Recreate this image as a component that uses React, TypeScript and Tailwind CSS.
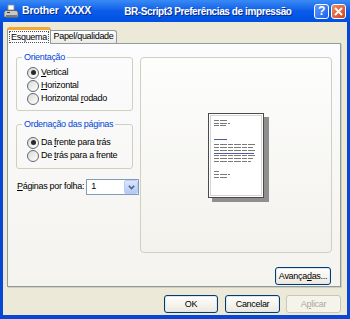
import React from "react";

type RadioProps = { checked?: boolean; pre: string; u: string; post: string };

function Radio({ checked, pre, u, post }: RadioProps) {
  return (
    <div className="flex items-center h-[13px] gap-[2px] whitespace-nowrap">
      <span className="shrink-0 w-[12px] h-[12px] rounded-full border border-[#5a6a7a] bg-linear-to-br from-[#dcdad0] to-white flex items-center justify-center">
        {checked && <span className="w-[5px] h-[5px] rounded-full bg-[#2a2a2a]" />}
      </span>
      <span>
        {pre}
        <span className="underline underline-offset-1">{u}</span>
        {post}
      </span>
    </div>
  );
}

function GroupBox({ title, className, children }: { title: string; className?: string; children: React.ReactNode }) {
  return (
    <fieldset className={`min-w-0 border border-[#d0d0bf] rounded-[3px] ${className ?? ""}`}>
      <legend className="ml-[5px] px-[2px] leading-[13px] text-[#0046d5] whitespace-nowrap">{title}</legend>
      <div className="pl-[10px]">{children}</div>
    </fieldset>
  );
}

function XpButton({ children, className, disabled }: { children: React.ReactNode; className?: string; disabled?: boolean }) {
  return (
    <button
      className={`h-[18px] rounded-[3px] border flex items-center justify-center leading-none whitespace-nowrap ${
        disabled
          ? "border-[#c9c7ba] bg-[#f5f4ea] text-[#aca899]"
          : "border-[#003c74] bg-linear-to-b from-white to-[#ece9dc] text-black shadow-[inset_0_0_0_1px_#dfe6f2]"
      } ${className ?? ""}`}
    >
      {children}
    </button>
  );
}

function PrinterIcon() {
  return (
    <svg width="15" height="15" viewBox="0 0 15 15">
      <rect x="4" y="1" width="6" height="5" fill="#fff" stroke="#8a8a8a" strokeWidth="0.8" />
      <path d="M1.5 6.5h11l1.5 2v4.5h-14v-4.5z" fill="#c8c8c8" stroke="#5a5a5a" strokeWidth="0.8" />
      <rect x="2" y="11" width="11" height="2.5" fill="#7a7a7a" />
      <rect x="3" y="8" width="3" height="1" fill="#3a3a3a" />
    </svg>
  );
}

function PaperPreview() {
  const gray = "#7a7a7a";
  const blue = "#4a5ea8";
  const lines: [number, number, number, string][] = [
    [7, 6, 20, gray],
    [10, 6, 22, gray],
    [12, 6, 18, gray],
    [26, 6, 19, blue],
    [31, 6, 48, gray],
    [34, 6, 45, gray],
    [37, 6, 48, gray],
    [40, 6, 46, blue],
    [42, 6, 48, gray],
    [45, 6, 45, gray],
    [48, 6, 43, gray],
    [58, 6, 12, gray],
    [61, 6, 22, gray],
    [64, 6, 20, gray],
  ];
  return (
    <svg width="61" height="89" viewBox="0 0 61 89">
      <rect x="4" y="4" width="57" height="85" fill="#8f8f8f" />
      <rect x="0.5" y="0.5" width="55" height="84" fill="#fff" stroke="#4a4a4a" />
      <rect x="2.5" y="2.5" width="51" height="80" fill="none" stroke="#d4d4d4" />
      {lines.map(([y, x1, x2, c], i) => (
        <line key={i} x1={x1} x2={x2} y1={y + 0.5} y2={y + 0.5} stroke={c} strokeWidth="1" strokeDasharray={c === gray ? "5 1 7 1" : undefined} />
      ))}
    </svg>
  );
}

export default function App() {
  return (
    <div className="w-[350px] h-[319px] flex flex-col bg-[#0846d6] font-['Liberation_Sans',Arial,sans-serif] text-[9px] tracking-[-0.3px] text-black overflow-hidden">
      {/* title bar */}
      <div className="h-[22px] shrink-0 flex items-center pl-[4px] pr-[4px] bg-linear-to-b from-[#3a8af4] via-[#0a5ce8] to-[#0050e2] whitespace-nowrap">
        <PrinterIcon />
        <span className="ml-[3px] font-bold text-[10.5px] tracking-[-0.2px] text-white [text-shadow:1px_1px_0_#0a2a8a]">
          Brother&nbsp;&nbsp;XXXX
        </span>
        <span className="ml-[33px] font-bold text-[10px] tracking-[-0.4px] text-white [text-shadow:1px_1px_0_#0a2a8a]">
          BR-Script3 Preferências de impressão
        </span>
        <div className="ml-auto flex gap-[2px]">
          <div className="w-[15px] h-[15px] rounded-[3px] border border-white bg-linear-to-br from-[#5f9bff] to-[#1a5ee8] flex items-center justify-center text-white font-bold text-[12px] leading-none">
            ?
          </div>
          <div className="w-[15px] h-[15px] rounded-[3px] border border-white bg-linear-to-br from-[#f08a60] to-[#d0401c] flex items-center justify-center">
            <svg width="9" height="9" viewBox="0 0 9 9">
              <path d="M1 1l7 7M8 1l-7 7" stroke="#fff" strokeWidth="1.8" />
            </svg>
          </div>
        </div>
      </div>

      {/* body */}
      <div className="flex-1 mx-[3px] mb-[4px] bg-[#ece9d8] flex flex-col pt-[5px] pl-[4px] pr-[6px]">
        {/* tabs */}
        <div className="h-[16px] flex items-end whitespace-nowrap">
          <div className="relative z-10 -mb-px h-[17px] w-[44px] border-x border-[#919b9c] border-t-[3px] border-t-[#f5a735] bg-[#fcfcfe] rounded-t-[3px] flex items-center justify-center">
            <span className="border border-dotted border-[#555] px-[1px] leading-[10px]">Esquema</span>
          </div>
          <div className="h-[13px] w-[66px] border-t border-r border-[#919b9c] bg-linear-to-b from-white to-[#ecebe5] rounded-tr-[3px] flex items-center justify-center">
            Papel/qualidade
          </div>
        </div>

        {/* panel */}
        <div className="h-[244px] border border-[#919b9c] bg-linear-to-b from-[#fcfcfe] to-[#f4f3ee] shadow-[1px_1px_0_#d0cec1] flex pt-[7px] px-[8px] gap-[7px]">
          <div className="w-[117px] flex flex-col">
            <GroupBox title="Orientação" className="pt-[2px] pb-[5px]">
              <Radio checked pre="" u="V" post="ertical" />
              <Radio pre="" u="H" post="orizontal" />
              <Radio pre="Horizontal " u="r" post="odado" />
            </GroupBox>
            <GroupBox title="Ordenação das páginas" className="mt-[7px] pt-[5px] pb-[6px]">
              <Radio checked pre="Da " u="f" post="rente para trás" />
              <Radio pre="De " u="t" post="rás para a frente" />
            </GroupBox>
            <div className="mt-[10px] flex items-center pl-[1px] gap-[2px] whitespace-nowrap">
              <span>
                <span className="underline underline-offset-1">P</span>áginas por folha:
              </span>
              <div className="shrink-0 w-[53px] h-[16px] border border-[#7f9db9] bg-white flex items-center">
                <span className="flex-1 pl-[4px]">1</span>
                <div className="w-[14px] h-[14px] rounded-[2px] bg-linear-to-b from-[#dbe6fd] to-[#b4c8f6] border border-[#b9cdf7] flex items-center justify-center">
                  <svg width="7" height="5" viewBox="0 0 7 5">
                    <path d="M0.8 0.8l2.7 2.7 2.7-2.7" fill="none" stroke="#4d6185" strokeWidth="1.6" />
                  </svg>
                </div>
              </div>
            </div>
          </div>

          <div className="w-[192px] flex flex-col mt-[6px]">
            <div className="h-[196px] border border-[#d0d0bf] rounded-[4px] bg-linear-to-b from-[#fdfdfc] to-[#f3f2ed] flex items-center justify-center pl-[4px] pt-[4px]">
              <PaperPreview />
            </div>
            <XpButton className="mt-[14px] self-end mr-[1px] w-[56px] h-[17px]">
              <span>
                Avança<span className="underline underline-offset-1">d</span>as...
              </span>
            </XpButton>
          </div>
        </div>

        {/* bottom buttons */}
        <div className="mt-[8px] flex justify-end">
          <XpButton className="w-[54px] shadow-[inset_0_0_0_1px_#98b8ea,inset_0_0_0_2px_#c4d6f6]">OK</XpButton>
          <XpButton className="w-[55px] ml-[7px]">Cancelar</XpButton>
          <XpButton disabled className="w-[55px] ml-[6px]">
            <span>
              A<span className="underline underline-offset-1">p</span>licar
            </span>
          </XpButton>
        </div>
      </div>
    </div>
  );
}
